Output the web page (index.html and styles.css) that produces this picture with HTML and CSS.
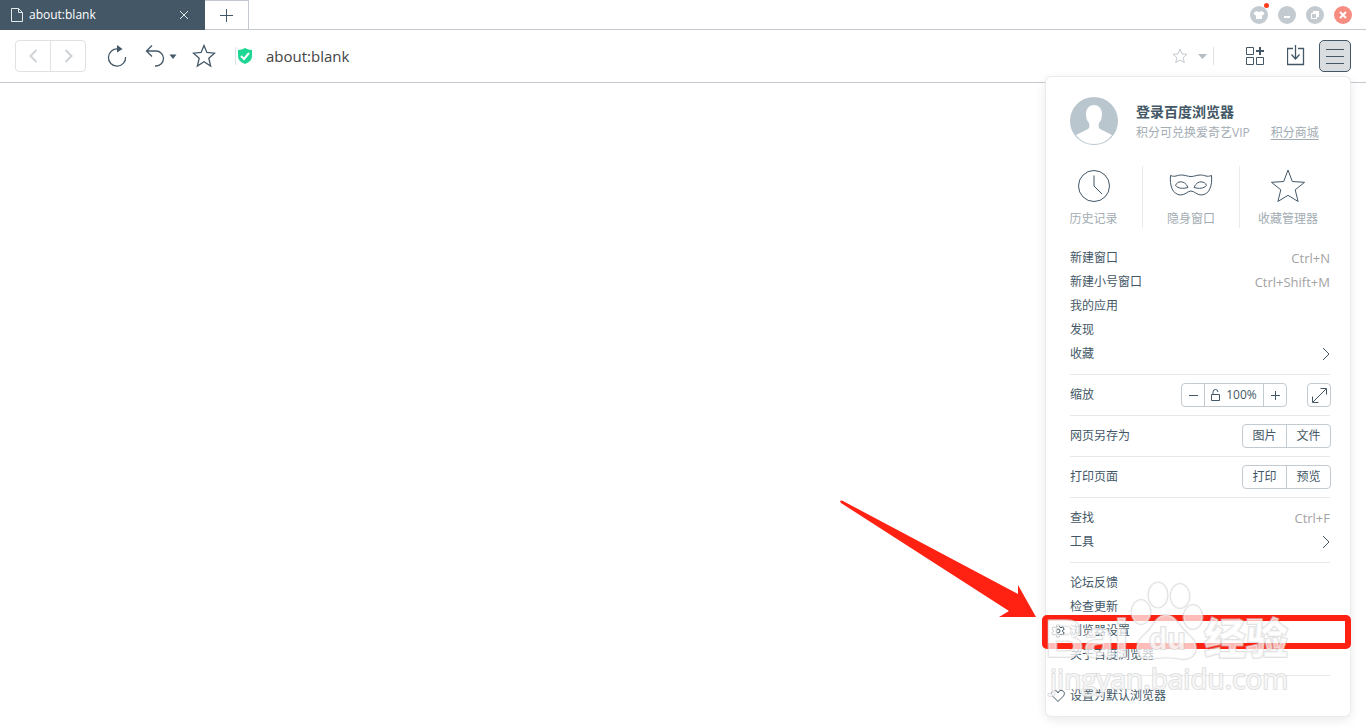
FILE: index.html
```html
<!DOCTYPE html>
<html lang="zh-CN">
<head>
<meta charset="utf-8">
<title>about:blank</title>
<link rel="stylesheet" href="styles.css">
</head>
<body>
<header class="tabbar">
  <div class="tab">
    <svg class="tab-icon" width="12" height="14" viewBox="0 0 12 14"><path d="M.5.5h7l4 4v9H.5zM7.500.5v4h4"/></svg>
    <span class="tab-title">about:blank</span>
    <button class="tab-close" aria-label="关闭标签页"><svg width="10" height="10" viewBox="0 0 10 10"><path d="M1 1l8 8M9 1l-8 8"/></svg></button>
  </div>
  <button class="tab-new" aria-label="新建标签页"><svg width="13" height="13" viewBox="0 0 13 13"><path d="M6.500 0v13M0 6.500h13"/></svg></button>
  <div class="window-controls">
    <button class="win skin" aria-label="皮肤"><svg width="18" height="18" viewBox="0 0 18 18"><path d="M6.500 5q2.500 2 5 0L14.500 7l-1.500 2.500-1-.6V13H6V8.900l-1 .6L3.500 7z"/></svg><span class="dot"></span></button>
    <button class="win" aria-label="最小化"><svg width="18" height="18" viewBox="0 0 18 18"><path d="M6 10h6v2H6z"/></svg></button>
    <button class="win" aria-label="还原"><svg width="18" height="18" viewBox="0 0 18 18"><path d="M7 5h6v6h-2v2H5V7h2z"/><path class="hole" d="M6 8h4v4H6z"/></svg></button>
    <button class="win close" aria-label="关闭"><svg width="18" height="18" viewBox="0 0 18 18"><path class="cross" d="M6 6l6 6M12 6l-6 6"/></svg></button>
  </div>
</header>

<nav class="toolbar">
  <div class="history-nav">
    <button aria-label="后退"><svg width="9" height="14" viewBox="0 0 9 14"><path d="M7.500 1L1.500 7l6 6"/></svg></button>
    <button aria-label="前进"><svg width="9" height="14" viewBox="0 0 9 14"><path d="M1.500 1l6 6-6 6"/></svg></button>
  </div>
  <button class="tool reload" aria-label="刷新"><svg width="20" height="22" viewBox="0 0 20 22"><path d="M11 4A8.600 8.600 0 1 0 18.600 12"/><path class="solid" d="M10 0l5.500 4-5.500 3.500z"/></svg></button>
  <button class="tool undo" aria-label="恢复">
    <svg width="20" height="22" viewBox="0 0 20 22"><path d="M7 .500L1.500 6 7 11.500M1.500 6H11a7.500 7.500 0 0 1 0 15h-1"/></svg>
    <svg width="8" height="5" viewBox="0 0 8 5"><path class="solid" d="M.500.500h7L4 5z"/></svg>
  </button>
  <button class="tool" aria-label="收藏夹"><svg width="24" height="24" viewBox="0 0 24 24"><path d="M12 1.500l2.900 7 7.600.7-5.700 5 1.800 7.800-6.600-4.200L5.400 22l1.800-7.800-5.700-5 7.600-.7z"/></svg></button>
  <div class="address">
    <svg class="shield" width="14" height="16" viewBox="0 0 14 16"><path d="M7 0q3 2 7 2v6q0 5.500-7 8-7-2.500-7-8V2q4 0 7-2z"/><path class="check" d="M3 8l3 3 5-6"/></svg>
    <input class="url" type="text" value="about:blank" aria-label="地址栏">
    <button class="mark" aria-label="收藏此页"><svg width="16" height="16" viewBox="0 0 16 16"><path d="M8 1l1.900 4.800 5.100.4-3.900 3.400 1.200 5L8 12l-4.300 2.600 1.200-5L1 6.200l5.100-.4z"/></svg></button>
    <button class="mark-more" aria-label="更多"><svg width="9" height="5" viewBox="0 0 9 5"><path d="M0 0h9L4.500 5z"/></svg></button>
  </div>
  <div class="actions">
    <button class="tool" aria-label="应用"><svg class="crisp" width="20" height="20" viewBox="0 0 20 20"><path d="M1.500 1.500h7v7h-7zM1.500 11.500h7v7h-7zM11.500 11.500h7v7h-7z"/><path class="bold" d="M15 1v8M11 5h8"/></svg></button>
    <button class="tool" aria-label="下载"><svg width="18" height="22" viewBox="0 0 18 22"><path d="M6 3.500H.500v16h16v-16H11M8.500 0v14M4.500 9.500l4 4.500 4-4.500"/></svg></button>
    <button class="menu-button" aria-label="菜单" aria-expanded="true"><svg width="18" height="16" viewBox="0 0 18 16"><path d="M0 1.500h18M0 8.500h18M0 15.500h18"/></svg></button>
  </div>

  <section class="menu">
    <div class="account">
      <svg class="avatar" width="48" height="48" viewBox="0 0 48 48"><circle cx="24" cy="24" r="24" fill="#bac6ce"/><path d="M24 8c5 0 8 4 8 9 0 4-1 7-3 9-1 4 0 6 3 7l10 5A22 22 0 0 1 24 47 22 22 0 0 1 6 38l10-5c3-1 4-3 3-7-2-2-3-5-3-9 0-5 3-9 8-9z" fill="#fff"/></svg>
      <div class="account-text">
        <strong>登录百度浏览器</strong>
        <div class="account-sub"><span>积分可兑换爱奇艺VIP</span><a href="#">积分商城</a></div>
      </div>
    </div>
    <div class="shortcuts">
      <button><svg width="44" height="36" viewBox="0 0 44 36"><circle cx="22" cy="18" r="15.500"/><path d="M22 7.500V18l8 8"/></svg>历史记录</button>
      <button><svg width="44" height="36" viewBox="0 0 44 36"><path d="M1.500 7.500c5 2 6-.500 11-.500 4 0 6 1.500 9.500 1.500S27.500 7 31.500 7c5 0 6 2.500 11 .500 1 10-2 19-10 19.500-5 0-7-4-10.500-4s-5.500 4-10.500 4c-8-.500-11-9.500-10-19.500z"/><path d="M6.500 17.500c1-4 9-6.500 12.500 2-5.500 1.500-9.500 1-12.500-2zM37.500 17.500c-1-4-9-6.500-12.500 2 5.500 1.500 9.500 1 12.500-2z"/></svg>隐身窗口</button>
      <button><svg width="44" height="36" viewBox="0 0 44 36"><path d="M22 2l4.300 11.500 12.200.8-9.300 7.500 2.900 11.700L22 27.300l-10.100 6.200 2.900-11.700-9.300-7.500 12.200-.8z"/></svg>收藏管理器</button>
    </div>
    <ul class="group">
      <li><button class="row">新建窗口<kbd>Ctrl+N</kbd></button></li>
      <li><button class="row">新建小号窗口<kbd>Ctrl+Shift+M</kbd></button></li>
      <li><button class="row">我的应用</button></li>
      <li><button class="row">发现</button></li>
      <li><button class="row">收藏<svg class="chevron" width="8" height="14" viewBox="0 0 8 14"><path d="M1 1l6 6-6 6"/></svg></button></li>
    </ul>
    <div class="group row">缩放
      <div class="zoom">
        <div class="segments">
          <button class="step" aria-label="缩小"><svg width="9" height="9" viewBox="0 0 9 9"><path d="M0 4.500h9"/></svg></button>
          <button class="level"><svg width="9" height="12" viewBox="0 0 9 12"><path d="M.500 5.500h8v6h-8zM2 5.500V3q0-2.500 2.500-2.500T7 3"/></svg>100%</button>
          <button class="step" aria-label="放大"><svg width="9" height="9" viewBox="0 0 9 9"><path d="M0 4.500h9M4.500 0v9"/></svg></button>
        </div>
        <div class="segments"><button class="step" aria-label="全屏"><svg width="15" height="15" viewBox="0 0 15 15"><path d="M1 14L14 1M8.500.500h6v6M.500 8.500v6h6"/></svg></button></div>
      </div>
    </div>
    <div class="group row">网页另存为<div class="segments wide"><button>图片</button><button>文件</button></div></div>
    <div class="group row">打印页面<div class="segments wide"><button>打印</button><button>预览</button></div></div>
    <ul class="group">
      <li><button class="row">查找<kbd>Ctrl+F</kbd></button></li>
      <li><button class="row">工具<svg class="chevron" width="8" height="14" viewBox="0 0 8 14"><path d="M1 1l6 6-6 6"/></svg></button></li>
    </ul>
    <ul class="group">
      <li><button class="row">论坛反馈</button></li>
      <li><button class="row">检查更新</button></li>
      <li class="marked">
        <button class="row"><svg class="lead" width="14" height="14" viewBox="0 0 14 14"><path d="M5.500 1h3v2l1.500.8 1.800-1 1.400 2.500L11.500 6.300v1.400l1.700 1-1.400 2.500-1.800-1-1.500.8v2h-3v-2L4 10.200l-1.800 1L.8 8.700l1.700-1V6.300L.8 5.300l1.400-2.500 1.800 1L5.500 3z"/><circle cx="7" cy="7" r="2"/></svg>浏览器设置</button>
        <svg class="arrow" width="200" height="120" viewBox="0 0 200 120"><path d="M0 0l2-.500L178 93V84l18 32h-37l10-6L1 2z"/></svg>
        <span class="frame"></span>
      </li>
      <li><button class="row">关于百度浏览器</button></li>
    </ul>
    <div class="group"><button class="row"><svg class="lead" width="14" height="14" viewBox="0 0 14 14"><path d="M7 12.500L1.700 7.200C-.5 4.500 1 1.500 3.800 1.500 5.500 1.500 6.500 2.500 7 4c.5-1.500 1.500-2.500 3.200-2.500 2.800 0 4.300 3 2.100 5.700z"/></svg>设置为默认浏览器</button></div>
    <svg class="watermark" width="260" height="130" viewBox="0 0 260 130">
      <text class="brand" x="5" y="82" font-size="54">Bai</text>
      <ellipse cx="118" cy="20" rx="9.500" ry="12.500"/><ellipse cx="140" cy="21" rx="9.500" ry="12"/><ellipse cx="101" cy="37" rx="9.500" ry="12"/><ellipse cx="153" cy="42" rx="9.500" ry="12"/>
      <path d="M126 40c-8 0-11 7-16 14-6 7-13 10-13 19 0 8 7 12 14 11 10-2 20-2 30 0 8 1 15-3 15-11 0-9-7-12-13-19-6-7-9-14-17-14z"/>
      <text class="brand" x="109" y="74" font-size="30">du</text>
      <text class="brand cjk" x="164" y="79" font-size="42">经验</text>
      <text class="site" x="10" y="114" font-size="28">jingyan.baidu.com</text>
    </svg>
  </section>
</nav>
<main class="page"></main>
</body>
</html>
```

FILE: styles.css
```css
* { box-sizing: border-box; }

body {
  margin: 0;
  min-height: 100vh;
  background: #fff;
  color: #435766;
  font: 12px/24px "Open Sans", "Noto Sans CJK SC", sans-serif;
  overflow: hidden;
}

button {
  display: flex;
  align-items: center;
  justify-content: center;
  padding: 0;
  border: 0;
  background: none;
  color: inherit;
  font: inherit;
  white-space: nowrap;
}

ul { margin: 0; padding: 0; list-style: none; }
svg { flex: none; fill: none; stroke: #435766; }

/* Tabs */
.tabbar {
  display: flex;
  height: 30px;
  border-bottom: 1px solid #c4c9d1;
}
.tab {
  display: flex;
  align-items: center;
  gap: 6px;
  width: 205px;
  height: 30px;
  padding: 0 16px 0 11px;
  background: #435766;
  color: #fff;
}
.tab svg { stroke: #e3e8eb; }
.tab-title { flex: 1; }
.tab-new {
  width: 44px;
  border: 1px solid #c4c9d1;
  border-width: 1px 1px 0 0;
}
.window-controls {
  display: flex;
  align-items: center;
  gap: 10px;
  margin-left: auto;
  padding-right: 14px;
}
.win {
  position: relative;
  width: 18px;
  height: 18px;
  border-radius: 50%;
  background: #c3cbd1;
}
.win svg { fill: #fff; stroke: none; }
.win .hole { fill: #c3cbd1; }
.win .cross { stroke: #fff; stroke-width: 2; }
.close { background: #f78c80; }
.dot {
  position: absolute;
  top: -3px;
  right: -1px;
  width: 5px;
  height: 5px;
  border-radius: 50%;
  background: #ff3c1e;
}

/* Toolbar */
.toolbar {
  position: relative;
  display: flex;
  align-items: center;
  height: 53px;
  padding: 0 15px;
  border-bottom: 1px solid #c4c9d1;
}
.history-nav {
  display: flex;
  width: 71px;
  height: 32px;
  margin-right: 21px;
  border: 1px solid #dfe2e4;
  border-radius: 4px;
}
.history-nav button { flex: 1; }
.history-nav button + button { border-left: 1px solid #dfe2e4; }
.history-nav svg { stroke: #cdd2d6; stroke-width: 2; }
.tool svg { stroke-width: 1.3; }
.tool .crisp { stroke-width: 1; }
.reload { margin-right: 18px; }
.undo { gap: 4px; margin-right: 15px; }
.solid { fill: #435766; stroke: none; }
.crisp .bold { stroke-width: 2; }
.address {
  display: flex;
  flex: 1;
  align-items: center;
  height: 18px;
  margin-left: 19px;
  padding: 0 6px 0 2px;
  border: 1px solid #dfe2e4;
  border-width: 0 1px;
}
.shield { fill: #1fd795; stroke: none; }
.check { fill: none; stroke: #fff; stroke-width: 2; }
.url {
  flex: 1;
  min-width: 0;
  margin-left: 14px;
  padding: 0;
  border: 0;
  outline: 0;
  background: none;
  color: #444;
  font: 15px/24px "Open Sans", sans-serif;
}
.mark svg { stroke: #c3cbd1; }
.mark-more { margin-left: 10px; }
.mark-more svg { fill: #b5bec5; stroke: none; }
.actions {
  display: flex;
  align-items: center;
  gap: 22px;
  margin-left: 31px;
}
.actions .menu-button { margin-left: -8px; }
.menu-button {
  width: 32px;
  height: 32px;
  border: 1px solid #435766;
  border-radius: 5px;
  background: #d9dde0;
}

/* Main menu */
.menu {
  position: absolute;
  z-index: 1;
  top: 47px;
  right: 16px;
  width: 304px;
  padding: 20px 20px 8px 24px;
  border-radius: 5px;
  background: #fff;
  box-shadow: 0 0 0 1px #ebebeb, 0 3px 12px rgba(0, 0, 0, .1);
}
.avatar { stroke: none; }
.account { display: flex; gap: 18px; }
.account-text { padding-top: 4px; line-height: 21px; }
.account-text strong { display: block; font-size: 14px; }
.account-sub { display: flex; gap: 21px; color: #a2acb3; }
.account-sub a { color: inherit; text-underline-offset: 2px; }
.shortcuts {
  display: grid;
  grid-template-columns: repeat(3, 1fr);
  margin: 21px -6px 18px -25px;
  color: #a2acb3;
}
.shortcuts button {
  flex-direction: column;
  gap: 4px;
  height: 62px;
  padding-top: 4px;
  line-height: 22px;
}
.shortcuts button + button { border-left: 1px solid #ebebeb; }
.group + .group {
  margin-top: 8px;
  padding-top: 8px;
  border-top: 1px solid #e8e8e8;
}
.row {
  display: flex;
  align-items: center;
  justify-content: space-between;
  width: 100%;
  min-height: 24px;
}
kbd { color: #a3a3a3; font: inherit; font-size: 13px; }
.zoom { display: flex; gap: 21px; }
.segments {
  display: flex;
  height: 24px;
  margin-right: -1px;
  border: 1px solid #c3cbd1;
  border-radius: 4px;
}
.segments button + button { border-left: 1px solid #c3cbd1; }
.step { width: 22px; }
.step + .level { width: 59px; gap: 6px; }
.level + .step { width: 23px; }
.wide button { width: 43px; }
.wide button + button { width: 44px; }
.marked, .group > .row { position: relative; }
.lead { position: absolute; top: 5px; left: -19px; }
.frame {
  position: absolute;
  top: -4px;
  right: -21px;
  bottom: -6px;
  left: -28px;
  border: 6px solid #ff2112;
  border-radius: 5px;
}
.arrow {
  position: absolute;
  top: -118px;
  right: 290px;
  fill: #ff2112;
  stroke: none;
  overflow: visible;
}

/* Watermark */
.watermark {
  position: absolute;
  top: 498px;
  left: -6px;
  fill: rgba(255, 255, 255, .7);
  stroke: rgba(205, 205, 205, .6);
  stroke-width: 2;
  stroke-linejoin: round;
  paint-order: stroke;
}
.brand { font-family: "Liberation Sans", sans-serif; font-weight: bold; }
.cjk { font-family: "Noto Sans CJK SC", sans-serif; font-weight: 900; }
.site { font-family: "Open Sans", sans-serif; }

.page { min-height: 0; }
```
